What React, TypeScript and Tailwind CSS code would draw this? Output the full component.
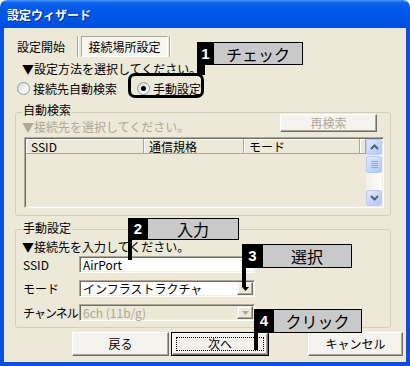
import React from "react";

function Radio({ checked }: { checked?: boolean }) {
  return (
    <span className="relative inline-block w-[13px] h-[13px] shrink-0 rounded-full border border-[#8E9AAB] bg-[linear-gradient(135deg,#D6D6CF_0%,#F4F4F0_60%,#FFFFFF_100%)]">
      {checked && <span className="absolute left-[3px] top-[3px] w-[5px] h-[5px] rounded-full bg-black" />}
    </span>
  );
}

function HeaderCell({ w, children }: { w: string; children?: React.ReactNode }) {
  return (
    <div className={`${w} h-[15px] shrink-0 flex items-center pl-[5px] border-r border-b border-[#ACA899] shadow-[inset_1px_1px_0_#FFFFFF] leading-[13px]`}>
      {children}
    </div>
  );
}

function Chevron({ up }: { up?: boolean }) {
  return (
    <svg width="9" height="6" viewBox="0 0 9 6">
      <polyline
        points={up ? "1,5 4.5,1.5 8,5" : "1,1 4.5,4.5 8,1"}
        fill="none"
        stroke="#4D6185"
        strokeWidth="2"
      />
    </svg>
  );
}

function ScrollBtn({ up }: { up?: boolean }) {
  return (
    <div className="h-[16px] shrink-0 rounded-[2px] border border-[#B9CBF5] bg-[linear-gradient(135deg,#E3EBFE_0%,#C3D4FC_60%,#B4C8F6_100%)] flex items-center justify-center">
      <Chevron up={up} />
    </div>
  );
}

function DropBtn({ disabled }: { disabled?: boolean }) {
  return (
    <div className="w-[16px] h-full shrink-0 bg-[#ECE9D8] border border-t-[#F1EFE2] border-l-[#F1EFE2] border-b-[#716F64] border-r-[#716F64] shadow-[inset_-1px_-1px_0_#ACA899,inset_1px_1px_0_#FFFFFF] flex items-center justify-center">
      <svg width="7" height="4" viewBox="0 0 7 4">
        <polygon points="0,0 7,0 3.5,4" fill={disabled ? "#ACA899" : "#000000"} />
      </svg>
    </div>
  );
}

function Sunken({ children, bg }: { children?: React.ReactNode; bg: string }) {
  return (
    <div className={`w-[176px] h-[17px] border border-t-[#ACA899] border-l-[#ACA899] border-b-white border-r-white shadow-[inset_1px_1px_0_#716F64,inset_-1px_-1px_0_#F1EFE2] p-[1px] flex ${bg}`}>
      {children}
    </div>
  );
}

function Button({ children, def, w }: { children?: React.ReactNode; def?: boolean; w: string }) {
  return (
    <div className={`${w} h-full shrink-0 ${def ? "border border-black" : ""}`}>
      <div className="w-full h-full bg-[#F4F3EE] border border-t-[#FFFFFF] border-l-[#FFFFFF] border-b-[#716F64] border-r-[#716F64] shadow-[inset_-1px_-1px_0_#ACA899] flex items-center justify-center">
        {def ? (
          <div className="w-[calc(100%-6px)] h-[calc(100%-6px)] border border-dotted border-black flex items-center justify-center">
            {children}
          </div>
        ) : (
          <span>{children}</span>
        )}
      </div>
    </div>
  );
}

export default function App() {
  return (
    <div className="relative w-[410px] h-[366px] flex flex-col font-['Noto_Sans_CJK_JP',sans-serif] text-[12px] leading-[14px] text-black bg-white">
      {/* Title bar */}
      <div className="h-[28px] shrink-0 rounded-t-[7px] bg-[linear-gradient(180deg,#4B97FA_0%,#0D63EE_10%,#0058EA_35%,#0054E4_75%,#004CDB_100%)] flex items-center pl-[7px] pt-[2px]">
        <span className="text-white font-bold text-[12px] [text-shadow:1px_1px_0_#0B2A8C]">設定ウィザード</span>
      </div>

      {/* Body */}
      <div className="flex-1 border-x-4 border-b-4 border-[#0A4EE4] bg-[#ECE9D8] flex flex-col">
        {/* Tabs */}
        <div className="mt-[8px] h-[21px] flex items-stretch">
          <span className="ml-[13px] self-center">設定開始</span>
          <span className="ml-[12px] w-[2px] border-l border-l-[#ACA899] border-r border-r-white" />
          <div className="ml-[2px] w-[87px] border border-t-[#ACA899] border-l-[#ACA899] border-b-white border-r-white bg-[#F7F6F1] flex items-center justify-center">
            接続場所設定
          </div>
          <span className="ml-[1px] w-[2px] border-l border-l-[#ACA899] border-r border-r-white" />
        </div>

        {/* Instruction */}
        <div className="mt-[5px] h-[14px] pl-[18px]">▼設定方法を選択してください。</div>

        {/* Radios */}
        <div className="mt-[6px] h-[14px] flex items-center">
          <span className="ml-[13px]"><Radio /></span>
          <span className="ml-[3px]">接続先自動検索</span>
          <span className="ml-[20px]"><Radio checked /></span>
          <span className="ml-[3px]">手動設定</span>
        </div>

        {/* Group 1 */}
        <div className="relative mt-[16px] ml-[11px] w-[376px] h-[104px] rounded-[3px] border border-[#D0D0BF] flex flex-col">
          <span className="absolute left-[6px] top-[-9px] px-[1px] leading-[12px] bg-[#ECE9D8]">自動検索</span>
          <div className="mt-[1px] h-[18px] flex items-start justify-between pl-[6px] pr-[13px]">
            <span className="mt-[7px] leading-[12px] text-[#ACA899]">▼接続先を選択してください。</span>
            <div className="w-[97px] h-[18px] bg-[#F4F3EE] border border-t-[#FFFFFF] border-l-[#FFFFFF] border-b-[#716F64] border-r-[#716F64] shadow-[inset_-1px_-1px_0_#ACA899] flex items-center justify-center text-[#ACA899]">
              再検索
            </div>
          </div>
          <div className="mt-[5px] ml-[8px] w-[360px] h-[71px] border border-t-[#ACA899] border-l-[#ACA899] border-b-white border-r-white shadow-[inset_1px_1px_0_#716F64,inset_-1px_-1px_0_#F1EFE2] p-[1px] flex">
            <div className="flex-1 flex flex-col">
              <div className="flex">
                <HeaderCell w="w-[118px]">SSID</HeaderCell>
                <HeaderCell w="w-[100px]">通信規格</HeaderCell>
                <HeaderCell w="w-[116px]">モード</HeaderCell>
                <HeaderCell w="flex-1" />
              </div>
            </div>
            <div className="w-[16px] flex flex-col bg-[linear-gradient(90deg,#F1F0EA,#FDFDFB)]">
              <ScrollBtn up />
              <div className="mt-[1px] h-[17px] shrink-0 rounded-[2px] border border-[#B9CBF5] bg-[linear-gradient(135deg,#E3EBFE_0%,#C3D4FC_60%,#B4C8F6_100%)] flex flex-col items-center justify-center gap-[1px]">
                <span className="w-[7px] h-[1px] bg-[#8FAAF0]" />
                <span className="w-[7px] h-[1px] bg-[#8FAAF0]" />
                <span className="w-[7px] h-[1px] bg-[#8FAAF0]" />
                <span className="w-[7px] h-[1px] bg-[#8FAAF0]" />
              </div>
              <div className="flex-1" />
              <ScrollBtn />
            </div>
          </div>
        </div>

        {/* Group 2 */}
        <div className="relative mt-[13px] ml-[11px] w-[376px] h-[99px] rounded-[3px] border border-[#D0D0BF] flex flex-col">
          <span className="absolute left-[6px] top-[-8px] px-[1px] leading-[12px] bg-[#ECE9D8]">手動設定</span>
          <div className="mt-[10px] h-[14px] pl-[6px]">▼接続先を入力してください。</div>
          <div className="mt-[2px] h-[17px] flex items-center pl-[7px]">
            <span className="w-[56px] shrink-0">SSID</span>
            <Sunken bg="bg-white">
              <span className="pl-[2px] leading-[13px]">AirPort</span>
            </Sunken>
          </div>
          <div className="mt-[7px] h-[17px] flex items-center pl-[7px]">
            <span className="w-[56px] shrink-0">モード</span>
            <Sunken bg="bg-white">
              <span className="flex-1 pl-[2px] leading-[13px]">インフラストラクチャ</span>
              <DropBtn />
            </Sunken>
          </div>
          <div className="mt-[7px] h-[17px] flex items-center pl-[7px]">
            <span className="w-[56px] shrink-0 tracking-[-1px] whitespace-nowrap">チャンネル</span>
            <Sunken bg="bg-[#ECE9D8]">
              <span className="flex-1 pl-[2px] leading-[13px] text-[#ACA899]">6ch (11b/g)</span>
              <DropBtn disabled />
            </Sunken>
          </div>
        </div>

        {/* Buttons */}
        <div className="mt-[4px] h-[24px] flex">
          <div className="ml-[68px]" />
          <Button w="w-[97px]">戻る</Button>
          <div className="ml-[2px]" />
          <Button w="w-[98px]" def>次へ</Button>
          <div className="ml-[39px]" />
          <Button w="w-[95px]">キャンセル</Button>
        </div>
      </div>

      {/* Callout 1 */}
      <div className="absolute left-[128px] top-[73px] w-[76px] h-[25px] rounded-[7px] border-[3px] border-black" />
      <div className="absolute left-[197px] top-[60px] w-[8px] h-[15px] bg-black" />
      <div className="absolute left-[197px] top-[42px] w-[17px] h-[23px] bg-black text-white font-['Liberation_Sans',sans-serif] font-bold text-[15px] flex items-center justify-center">1</div>
      <div className="absolute left-[213px] top-[42px] w-[90px] h-[23px] bg-[#C9C9C9] border border-black flex items-center justify-center text-[16px] leading-[18px]">チェック</div>

      {/* Callout 2 */}
      <div className="absolute left-[128px] top-[238px] w-[4px] h-[22px] bg-black" />
      <div className="absolute left-[128px] top-[218px] w-[20px] h-[22px] bg-black text-white font-['Liberation_Sans',sans-serif] font-bold text-[15px] flex items-center justify-center">2</div>
      <div className="absolute left-[147px] top-[218px] w-[92px] h-[22px] bg-[#C9C9C9] border border-black flex items-center justify-center text-[16px] leading-[18px]">入力</div>

      {/* Callout 3 */}
      <div className="absolute left-[242px] top-[266px] w-[4px] h-[21px] bg-black" />
      <div className="absolute left-[242px] top-[244px] w-[21px] h-[24px] bg-black text-white font-['Liberation_Sans',sans-serif] font-bold text-[15px] flex items-center justify-center">3</div>
      <div className="absolute left-[262px] top-[244px] w-[90px] h-[24px] bg-[#C9C9C9] border border-black flex items-center justify-center text-[16px] leading-[18px]">選択</div>

      {/* Callout 4 */}
      <div className="absolute left-[254px] top-[331px] w-[4px] h-[19px] bg-black" />
      <div className="absolute left-[254px] top-[309px] w-[20px] h-[24px] bg-black text-white font-['Liberation_Sans',sans-serif] font-bold text-[15px] flex items-center justify-center">4</div>
      <div className="absolute left-[273px] top-[309px] w-[89px] h-[24px] bg-[#C9C9C9] border border-black flex items-center justify-center text-[16px] leading-[18px]">クリック</div>
    </div>
  );
}
